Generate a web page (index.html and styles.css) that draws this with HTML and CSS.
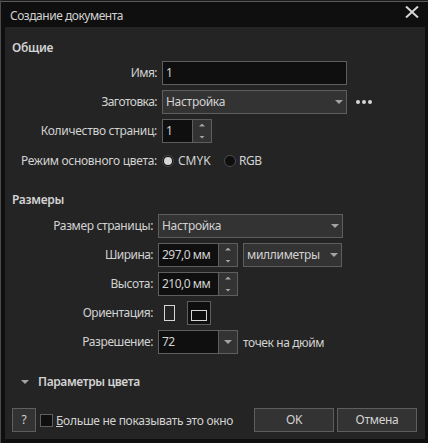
FILE: index.html
```
<!DOCTYPE html>
<html lang="ru">
<head>
    <meta charset="UTF-8">
    <title>Создание документа</title>
    <link rel="stylesheet" href="styles.css">
</head>
<body>
    <div class="dialog">
        <div class="titlebar">
            <span class="title">Создание документа</span>
            <svg class="close" width="14" height="12" viewBox="0 0 14 12"><path d="M1 .5 13 11.5M13 .5 1 11.5" stroke="#d6d6d6" stroke-width="2" fill="none"/></svg>
        </div>
        <div class="content">
            <h2>Общие</h2>
            <div class="rows general">
                <div class="row">
                    <label class="name">Имя:</label>
                    <div class="field wide">1</div>
                </div>
                <div class="row">
                    <label class="preset">Заготовка:</label>
                    <div class="select wide"><span>Настройка</span><i class="arrow"></i></div>
                    <div class="dots"><i></i><i></i><i></i></div>
                </div>
                <div class="row">
                    <label class="count">Количество страниц:</label>
                    <div class="spinner small"><span>1</span><div class="steps"><i class="up"></i><i class="down"></i></div></div>
                </div>
                <div class="row mode-row">
                    <label class="mode">Режим основного цвета:</label>
                    <div class="radio checked"></div>
                    <span class="radio-text cmyk">CMYK</span>
                    <div class="radio"></div>
                    <span class="radio-text">RGB</span>
                </div>
            </div>

            <h2 class="sizes-title">Размеры</h2>
            <div class="rows sizes">
                <div class="row">
                    <label class="page-size">Размер страницы:</label>
                    <div class="select wide"><span>Настройка</span><i class="arrow"></i></div>
                </div>
                <div class="row">
                    <label class="width">Ширина:</label>
                    <div class="spinner"><span class="num">297,0 мм</span><div class="steps"><i class="up"></i><i class="down"></i></div></div>
                    <div class="select units"><span>миллиметры</span><i class="arrow"></i></div>
                </div>
                <div class="row">
                    <label class="height">Высота:</label>
                    <div class="spinner"><span class="num">210,0 мм</span><div class="steps"><i class="up"></i><i class="down"></i></div></div>
                </div>
                <div class="row">
                    <label class="orient">Ориентация:</label>
                    <div class="orient-btn"><i class="portrait"></i></div>
                    <div class="orient-btn active"><i class="landscape"></i></div>
                </div>
                <div class="row">
                    <label class="res">Разрешение:</label>
                    <div class="spinner"><span class="num">72</span><div class="steps"><i class="arrow"></i></div></div>
                    <span class="dpi">точек на дюйм</span>
                </div>
            </div>

            <div class="expander"><i class="arrow"></i><h2>Параметры цвета</h2></div>

            <div class="footer">
                <div class="button help">?</div>
                <div class="checkbox"></div>
                <span class="dont-show"><u>Б</u>ольше не показывать это окно</span>
                <div class="button ok">OK</div>
                <div class="button cancel">Отмена</div>
            </div>
        </div>
    </div>
</body>
</html>
```
FILE: styles.css
```
* {
    box-sizing: border-box;
}
body {
    margin: 0;
    background: #0f0f0f;
    font-family: "Noto Sans", "Open Sans", sans-serif;
    font-size: 12px;
    line-height: 16px;
    letter-spacing: -0.3px;
    color: #d2d2d2;
    overflow: hidden;
}
.dialog {
    width: 428px;
    height: 443px;
    padding: 0 4px 4px 4px;
    border-left: 1px solid #4b4b4b;
    border-top: 1px solid #1c1c1c;
    box-shadow: inset 0 1px #5a5a5a;
    white-space: nowrap;
}
.titlebar {
    display: flex;
    justify-content: space-between;
    height: 26px;
    padding: 6px 5px 0 5px;
}
.title {
    margin-top: 1px;
    letter-spacing: -0.47px;
}
.close {
    margin-top: -1px;
}
.content {
    height: 412px;
    margin-right: -1px;
    padding: 13px 7px 0 7px;
    background: #242424;
}
h2 {
    margin: 0;
    font-size: 12px;
    line-height: 16px;
    font-weight: 600;
}
.rows {
    display: flex;
    flex-direction: column;
    gap: 5px;
}
.general {
    margin-top: 5px;
}
.row {
    display: flex;
    align-items: center;
    height: 24px;
}
.mode-row {
    padding-top: 1px;
}
label {
    width: 145px;
    margin-right: 5px;
    text-align: right;
    flex: none;
}
.sizes label {
    width: 141px;
}
.name, .preset, .width {
    letter-spacing: -0.55px;
}
.page-size, .height {
    letter-spacing: -0.37px;
}
.orient, .res {
    letter-spacing: -0.43px;
}
.field, .select, .spinner {
    display: flex;
    align-items: center;
    flex: none;
    height: 24px;
    border: 1px solid #5e5e5e;
    background: #0f0f0f;
}
.field {
    padding-left: 3px;
}
.wide {
    width: 185px;
}
.select {
    justify-content: space-between;
    padding: 0 3px;
    background: #333;
}
.units {
    width: 99px;
    margin-left: 5px;
}
.arrow {
    width: 8px;
    height: 4px;
    background: #a3a3a3;
    clip-path: polygon(0 0, 100% 0, 50% 100%);
}
.spinner {
    justify-content: space-between;
    width: 80px;
    padding-left: 3px;
}
.num {
    letter-spacing: -0.5px;
}
.small {
    width: 50px;
}
.steps {
    display: flex;
    flex-direction: column;
    align-items: center;
    justify-content: center;
    gap: 9px;
    width: 19px;
    height: 22px;
    border-left: 1px solid #5e5e5e;
    background: #333;
}
.up, .down {
    width: 6px;
    height: 3px;
    background: #a3a3a3;
    clip-path: polygon(0 0, 100% 0, 50% 100%);
}
.up {
    clip-path: polygon(50% 0, 100% 100%, 0 100%);
}
.dots {
    display: flex;
    gap: 2px;
    margin-left: 9px;
}
.dots i {
    width: 4px;
    height: 4px;
    border-radius: 50%;
    background: #d6d6d6;
}
.radio {
    display: flex;
    width: 12px;
    height: 12px;
    border: 1px solid #4b4b4b;
    border-radius: 50%;
    background: #0f0f0f;
    flex: none;
}
.checked::after {
    content: "";
    width: 8px;
    height: 8px;
    margin: 1px;
    border-radius: 50%;
    background: #d6d6d6;
}
.radio-text {
    margin-left: 4px;
    letter-spacing: -0.5px;
}
.cmyk {
    width: 33px;
    letter-spacing: 0;
}
.radio-text + .radio {
    margin-left: 13px;
}
.radio + .radio-text:last-child {
    margin-left: 3px;
}
.sizes-title {
    margin-top: 20px;
    margin-bottom: 6px;
}
.orient-btn {
    display: flex;
    align-items: center;
    justify-content: center;
    width: 24px;
    height: 24px;
    padding-right: 1px;
}
.active {
    margin-left: 5px;
    padding: 5px 0 0 0;
    border: 1px solid #5e5e5e;
    background: #0f0f0f;
}
.portrait, .landscape {
    width: 11px;
    height: 16px;
    border: 1px solid #d6d6d6;
}
.landscape {
    width: 16px;
    height: 11px;
}
.dpi {
    margin-left: 5px;
    padding-top: 2px;
    letter-spacing: -0.4px;
}
.expander {
    display: flex;
    align-items: center;
    gap: 9px;
    margin: 20px 0 18px 9px;
}
.expander h2 {
    letter-spacing: -0.38px;
}
.footer {
    display: flex;
    align-items: center;
    height: 24px;
}
.button {
    width: 80px;
    height: 24px;
    border: 1px solid #5e5e5e;
    background: #333;
    line-height: 22px;
    text-align: center;
    flex: none;
}
.help {
    width: 24px;
}
.checkbox {
    width: 13px;
    height: 13px;
    margin-left: 4px;
    border: 1px solid #5e5e5e;
    background: #0f0f0f;
    flex: none;
}
.dont-show {
    width: 198px;
    margin-left: 3px;
    padding-top: 2px;
}
.cancel {
    margin-left: 3px;
}
```
